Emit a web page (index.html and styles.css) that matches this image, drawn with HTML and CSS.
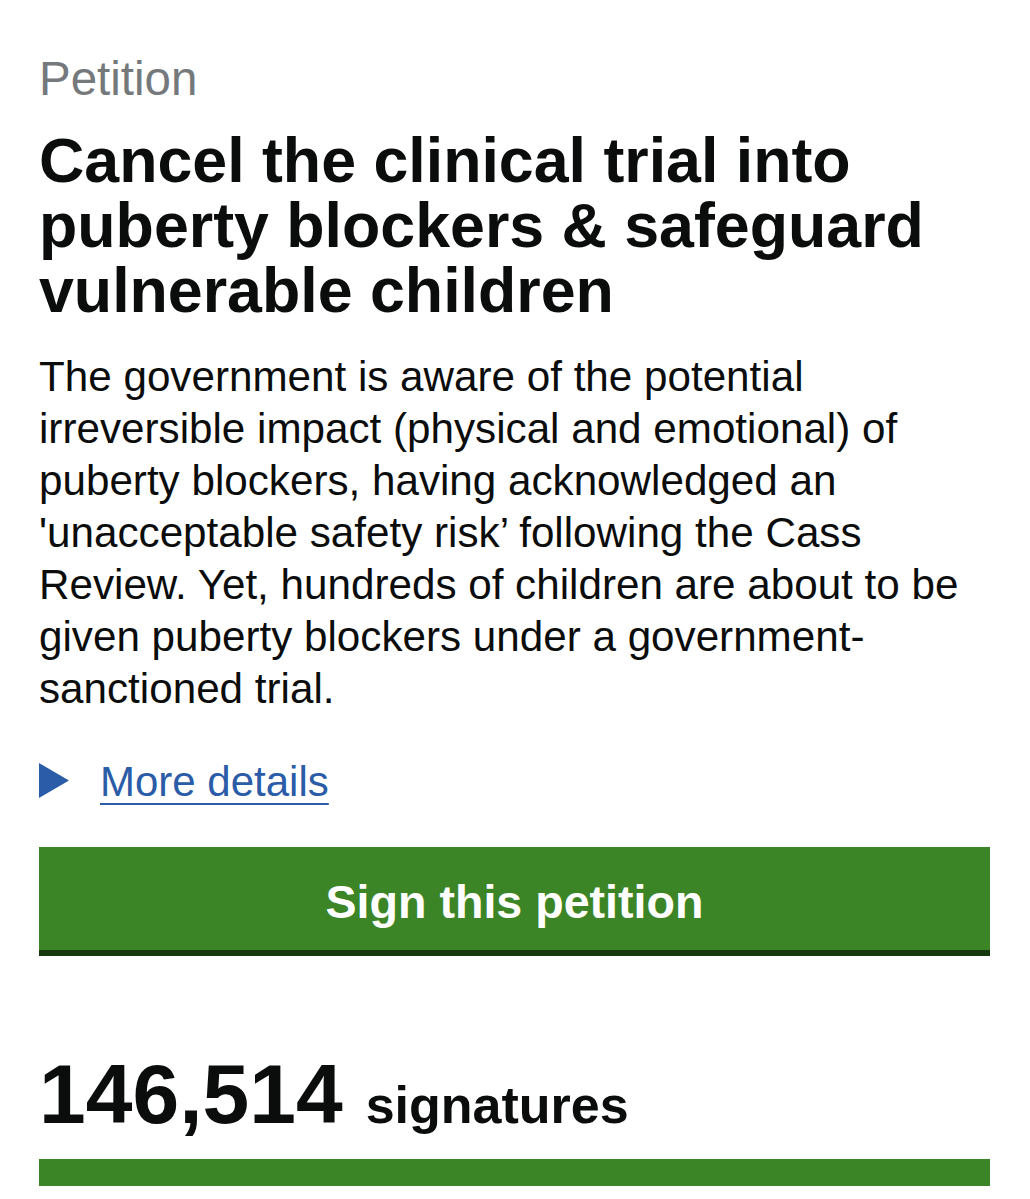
FILE: index.html
```html
<!DOCTYPE html>
<html lang="en">
<head>
<meta charset="utf-8">
<title>Petition</title>
<link rel="stylesheet" href="styles.css">
</head>
<body>
<main class="page">
  <p class="caption">Petition</p>
  <h1 class="title">Cancel the clinical trial into puberty blockers &amp; safeguard vulnerable children</h1>
  <p class="summary">The government is aware of the potential irreversible impact (physical and emotional) of puberty blockers, having acknowledged an 'unacceptable safety risk’ following the Cass Review. Yet, hundreds of children are about to be given puberty blockers under a government-sanctioned trial.</p>
  <div class="details">
    <svg class="details-arrow" width="30" height="35" viewBox="0 0 30 35" aria-hidden="true"><polygon points="0,0 30,17.5 0,35" fill="#2a5ca8"/></svg>
    <a class="details-link" href="#">More details</a>
  </div>
  <a class="sign-button" href="#">Sign this petition</a>
  <div class="count">
    <span class="count-number">146,514</span>
    <span class="count-label">signatures</span>
  </div>
  <div class="progress"><div class="progress-fill" style="width:100%"></div></div>
</main>
</body>
</html>
```
FILE: styles.css
```css
* { box-sizing: border-box; }
html, body { margin: 0; padding: 0; background: #fff; }
body {
  font-family: "Liberation Sans", Arial, Helvetica, sans-serif;
  color: #0b0c0c;
}
.page {
  padding: 53px 40px 0 39px;
  display: flex;
  flex-direction: column;
}
.caption {
  margin: 0;
  font-size: 47.5px;
  line-height: 52px;
  color: #75797c;
}
.title {
  margin: 23px 0 0;
  font-size: 62.7px;
  line-height: 65px;
  font-weight: 700;
}
.summary {
  margin: 28px 0 0;
  font-size: 42.2px;
  line-height: 52px;
}
.details {
  margin-top: 41px;
  display: flex;
  align-items: flex-start;
  gap: 31px;
  height: 52px;
}
.details-arrow { display: block; margin-top: 7px; flex: none; }
.details-link {
  font-size: 42px;
  line-height: 52px;
  color: #2a5ca8;
  text-decoration: underline;
  text-decoration-thickness: 2px;
  text-underline-offset: 7px;
}
.sign-button {
  margin-top: 39px;
  display: block;
  height: 103px;
  padding: 30px 0 23px;
  background: #3c8527;
  box-shadow: 0 6px 0 #163a0d;
  color: #fff;
  text-align: center;
  text-decoration: none;
  font-size: 46.6px;
  line-height: 50px;
  font-weight: 700;
}
.count {
  margin-top: 102px;
  display: flex;
  align-items: baseline;
  gap: 23px;
  font-weight: 700;
  line-height: 1;
}
.count-number { font-size: 84px; line-height: 84px; }
.count-label { font-size: 52px; }
.progress {
  margin-top: 23px;
  height: 27px;
  background: #dee0e2;
}
.progress-fill { height: 100%; background: #3c8527; }
```
